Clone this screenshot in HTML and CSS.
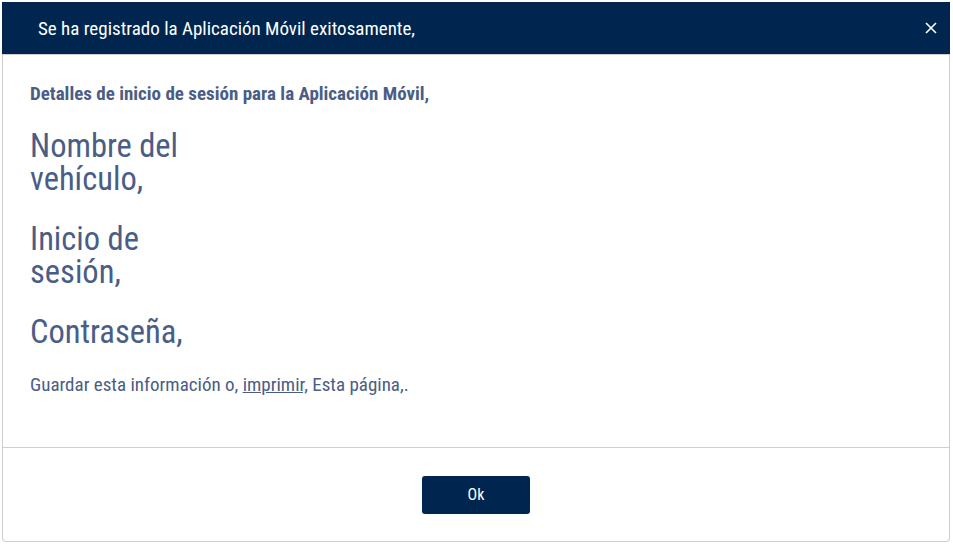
FILE: index.html
```html
<!DOCTYPE html>
<html lang="es">
<head>
<meta charset="utf-8">
<title>Aplicación Móvil</title>
<link rel="stylesheet" href="styles.css">
</head>
<body>
<div class="modal">
  <div class="modal-header">
    <h1 class="modal-title">Se ha registrado la Aplicación Móvil exitosamente,</h1>
    <button class="close" aria-label="Cerrar">
      <svg width="12" height="12" viewBox="0 0 12 12"><path d="M1 1 L11 11 M11 1 L1 11" stroke="#fff" stroke-width="1.6" fill="none"/></svg>
    </button>
  </div>
  <div class="modal-body">
    <p class="subtitle">Detalles de inicio de sesión para la Aplicación Móvil,</p>
    <div class="field">Nombre del vehículo,</div>
    <div class="field">Inicio de sesión,</div>
    <div class="field">Contraseña,</div>
    <p class="note">Guardar esta información o, <a href="#" class="link">imprimir,</a> Esta página,.</p>
  </div>
  <div class="modal-footer">
    <button class="btn-ok">Ok</button>
  </div>
</div>
</body>
</html>
```

FILE: styles.css
```css
html, body {
  margin: 0;
  padding: 0;
  background: #ffffff;
}
body {
  font-family: "Roboto Condensed", "Roboto", "Liberation Sans Narrow", sans-serif;
  font-stretch: 80%;
}
.modal {
  margin: 2px 0 0 2px;
  width: 946px;
  height: 539px;
  border: 1px solid #cfcfcf;
  border-top: none;
  border-radius: 0 0 4px 4px;
  display: flex;
  flex-direction: column;
  box-sizing: content-box;
}
.modal-header {
  background: #00264f;
  height: 52px;
  border-bottom: 1px solid #cfcfcf;
  display: flex;
  align-items: center;
  justify-content: space-between;
  padding: 0 9px 0 36px;
  margin: 0 -1px;
}
.modal-title {
  margin: 0;
  color: #ffffff;
  font-size: 19px;
  font-weight: 400;
  font-stretch: 80%;
}
.close {
  background: none;
  border: none;
  padding: 4px;
  display: flex;
  cursor: pointer;
}
.modal-body {
  flex: 1;
  padding: 27px 27px 0 27px;
  color: #4a5d86;
}
.subtitle {
  margin: 0 0 25px 0;
  font-size: 19px;
  font-weight: 700;
  font-stretch: 80%;
}
.field {
  width: 172px;
  font-size: 32.5px;
  line-height: 33px;
  margin-bottom: 27px;
  font-stretch: 80%;
}
.note {
  margin: -3px 0 0 0;
  font-size: 19px;
  font-stretch: 80%;
}
.link {
  color: #4a5d86;
  text-decoration: underline;
}
.modal-footer {
  height: 93px;
  border-top: 1px solid #cfcfcf;
  display: flex;
  align-items: center;
  justify-content: center;
}
.btn-ok {
  width: 108px;
  height: 38px;
  background: #00264f;
  color: #ffffff;
  border: none;
  border-radius: 3px;
  font-family: "Roboto Condensed", "Roboto", sans-serif;
  font-stretch: 80%;
  font-size: 16px;
}
```
